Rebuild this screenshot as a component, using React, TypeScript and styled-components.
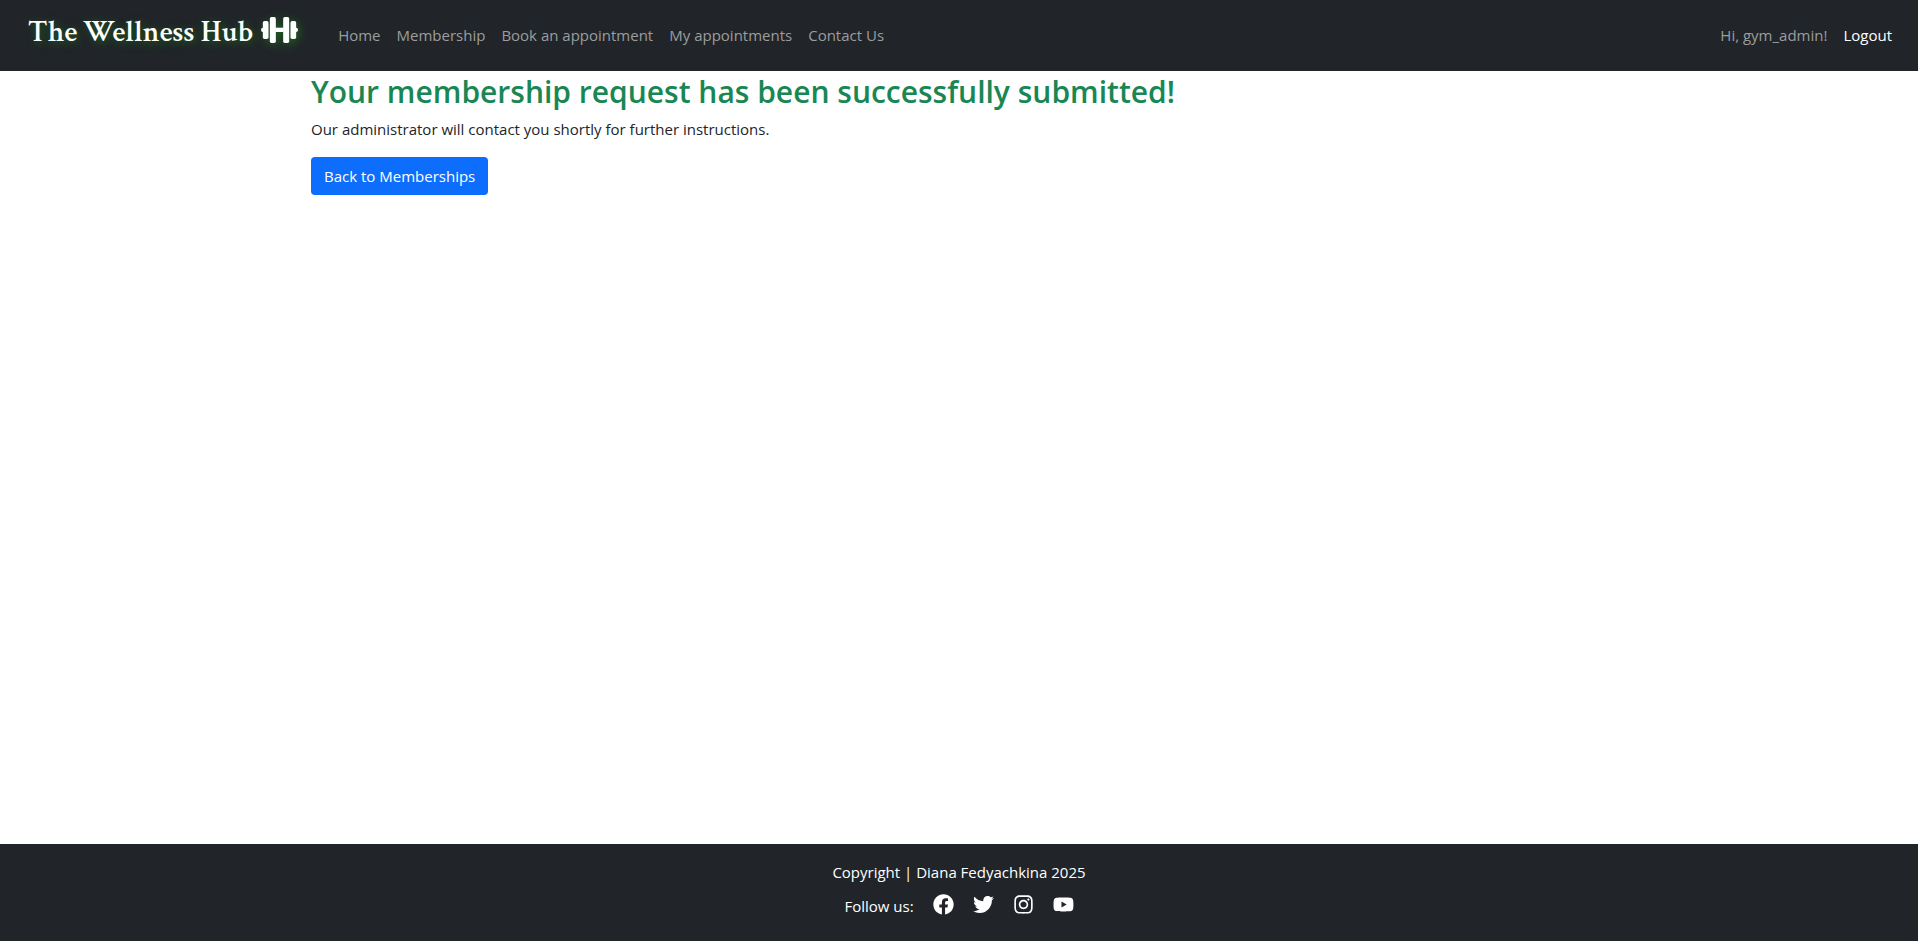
import styled, { createGlobalStyle } from "styled-components";
import { FaFacebook, FaInstagram, FaTwitter, FaYoutube } from "react-icons/fa";

const GlobalStyle = createGlobalStyle`
  *, *::before, *::after { box-sizing: border-box; }
  body {
    margin: 0;
    background: #fff;
    color: #212529;
    font-family: "Segoe UI", "Open Sans", "Noto Sans", sans-serif;
    font-size: 15px;
    line-height: 24px;
  }
`;

const Page = styled.div`
  display: flex;
  flex-direction: column;
  min-height: 100vh;
`;

const Navbar = styled.nav`
  display: flex;
  align-items: flex-start;
  padding: 8px 18px 9px 28px;
  background: #212529;
`;

const Brand = styled.a`
  display: flex;
  align-items: center;
  gap: 8px;
  margin-right: 32px;
  color: #fff;
  font-family: "Crimson Text", "Liberation Serif", serif;
  font-size: 30px;
  font-weight: 600;
  line-height: 50px;
  text-decoration: none;
  text-shadow: 2px 2px 8px #1e641e;
`;

const DumbbellIcon = styled.svg`
  width: 37px;
  height: 26px;
  margin-bottom: 6px;
  fill: #fff;
  filter: drop-shadow(2px 2px 4px #1e641e);
`;

const NavList = styled.ul`
  display: flex;
  margin: 0;
  padding: 7px 0;
  list-style: none;
  &:last-child { margin-left: auto; }
`;

const NavItem = styled.li`
  padding: 8px;
  color: #9b9d9e;
`;

const NavLink = styled.a<{ $active?: boolean }>`
  color: ${(p) => (p.$active ? "#fff" : "#9b9d9e")};
  text-decoration: none;
`;

const Content = styled.main`
  flex: 1;
  width: 100%;
  max-width: 1320px;
  margin: 0 auto;
  padding: 0 12px;
`;

const Title = styled.h2`
  margin: 0 0 4px;
  color: #198754;
  font-size: 30px;
  font-weight: 600;
  line-height: 42px;
`;

const Message = styled.p`
  margin: 0 0 16px;
`;

const ButtonLink = styled.a`
  display: inline-block;
  padding: 7px 13px;
  border-radius: 4px;
  background: #0d6efd;
  color: #fff;
  text-decoration: none;
`;

const Footer = styled.footer`
  display: flex;
  flex-direction: column;
  align-items: center;
  gap: 10px;
  padding: 16px 0 23px;
  background: #212529;
  color: #fff;
`;

const Social = styled.div`
  display: flex;
  align-items: flex-start;
  gap: 19px;
`;

const SocialLink = styled.a`
  display: flex;
  color: #fff;
  svg {
    width: auto;
    height: 21px;
  }
`;

const pages = ["Home", "Membership", "Book an appointment", "My appointments", "Contact Us"];

const networks = [
  { name: "Facebook", Icon: FaFacebook },
  { name: "Twitter", Icon: FaTwitter },
  { name: "Instagram", Icon: FaInstagram },
  { name: "YouTube", Icon: FaYoutube },
];

function Dumbbell() {
  return (
    <DumbbellIcon viewBox="0 0 110 78" aria-hidden="true">
      <rect x="0" y="32" width="12" height="13" rx="5" />
      <rect x="5" y="12" width="17" height="54" rx="5" />
      <rect x="26" y="0" width="18" height="78" rx="5" />
      <rect x="42" y="32" width="26" height="13" />
      <rect x="66" y="0" width="18" height="78" rx="5" />
      <rect x="88" y="12" width="17" height="54" rx="5" />
      <rect x="98" y="32" width="12" height="13" rx="5" />
    </DumbbellIcon>
  );
}

export default function App() {
  return (
    <Page>
      <GlobalStyle />
      <Navbar>
        <Brand href="#">
          The Wellness Hub <Dumbbell />
        </Brand>
        <NavList>
          {pages.map((page) => (
            <NavItem key={page}>
              <NavLink href="#">{page}</NavLink>
            </NavItem>
          ))}
        </NavList>
        <NavList>
          <NavItem>Hi, gym_admin!</NavItem>
          <NavItem>
            <NavLink href="#" $active>Logout</NavLink>
          </NavItem>
        </NavList>
      </Navbar>
      <Content>
        <Title>Your membership request has been successfully submitted!</Title>
        <Message>Our administrator will contact you shortly for further instructions.</Message>
        <ButtonLink href="#">Back to Memberships</ButtonLink>
      </Content>
      <Footer>
        <div>Copyright | Diana Fedyachkina 2025</div>
        <Social>
          <span>Follow us:</span>
          {networks.map(({ name, Icon }) => (
            <SocialLink key={name} href="#" aria-label={name}>
              <Icon />
            </SocialLink>
          ))}
        </Social>
      </Footer>
    </Page>
  );
}
